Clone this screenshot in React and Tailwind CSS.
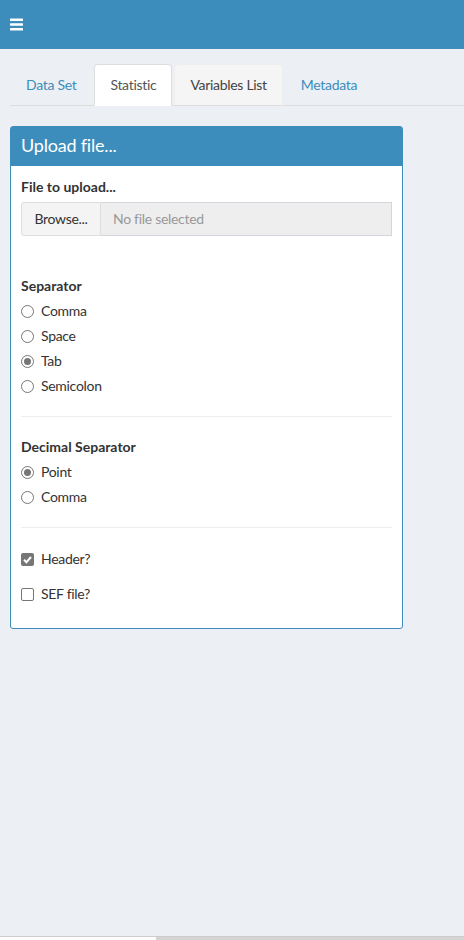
import React from "react";

function Radio({ label, checked }) {
  return (
    <label className="flex items-center h-5 gap-[7px]">
      <span className="w-[13px] h-[13px] rounded-full border border-[#767676] bg-white flex items-center justify-center">
        {checked && <span className="w-[7px] h-[7px] rounded-full bg-[#767676]" />}
      </span>
      <span className="tracking-[-0.3px]">{label}</span>
    </label>
  );
}

function Checkbox({ label, checked }) {
  return (
    <label className="flex items-center h-5 gap-[7px]">
      {checked ? (
        <span className="w-[13px] h-[13px] rounded-[2px] bg-[#767676] flex items-center justify-center">
          <svg width="11" height="11" viewBox="0 0 11 11">
            <path d="M2 5.8 L4.4 8.2 L9 3" fill="none" stroke="#fff" strokeWidth="2" />
          </svg>
        </span>
      ) : (
        <span className="w-[13px] h-[13px] rounded-[2px] border border-[#767676] bg-white" />
      )}
      <span className="tracking-[-0.3px]">{label}</span>
    </label>
  );
}

export default function App() {
  const tabs = [
    { name: "Data Set" },
    { name: "Statistic", active: true },
    { name: "Variables List", hover: true },
    { name: "Metadata" },
  ];

  return (
    <div
      className="h-[940px] flex flex-col bg-[#ecf0f5] text-[14px] leading-5 text-[#333]"
      style={{ fontFamily: "Lato, 'Noto Sans', sans-serif" }}
    >
      <header className="h-[49px] bg-[#3c8dbc] flex items-center px-[10px] shrink-0">
        <svg width="13" height="13" viewBox="0 0 13 13">
          <rect x="0" y="0.5" width="13" height="2.6" rx="0.6" fill="#fff" />
          <rect x="0" y="5.2" width="13" height="2.6" rx="0.6" fill="#fff" />
          <rect x="0" y="9.9" width="13" height="2.6" rx="0.6" fill="#fff" />
        </svg>
      </header>

      <main className="flex-1 pt-[15px]">
        <ul className="ml-[10px] flex border-b border-[#ddd]">
          {tabs.map((t) => (
            <li key={t.name} className="mr-[2px] -mb-px">
              <a
                className={
                  "block px-[15px] py-[10px] rounded-t-[4px] border tracking-[-0.3px] " +
                  (t.active
                    ? "bg-white border-[#ddd] border-b-white text-[#555]"
                    : t.hover
                    ? "bg-[#f5f5f5] border-[#eee] border-b-[#ddd] text-[#444]"
                    : "border-transparent text-[#3c8dbc]")
                }
              >
                {t.name}
              </a>
            </li>
          ))}
        </ul>

        <section className="ml-[10px] mt-[20px] w-[393px] border border-[#3c8dbc] rounded-[3px] bg-white">
          <div className="bg-[#3c8dbc] px-[10px] pt-[8px] pb-[10px] text-white text-[18px] leading-[21px] tracking-[-0.2px]">
            Upload file...
          </div>
          <div className="px-[10px] pt-[11px] pb-[24px]">
            <div className="font-bold mb-[5px]">File to upload...</div>
            <div className="flex h-[34px]">
              <div className="w-[80px] border border-[#ddd] bg-[#f4f4f4] rounded-l-[3px] flex items-center justify-center text-[#333] tracking-[-0.3px]">
                Browse...
              </div>
              <div className="flex-1 border border-l-0 border-[#d2d6de] bg-[#eee] flex items-center px-[12px] text-[#999] tracking-[-0.3px]">
                No file selected
              </div>
            </div>

            <div className="font-bold mt-[40px] mb-[5px]">Separator</div>
            <div className="flex flex-col gap-[5px]">
              <Radio label="Comma" />
              <Radio label="Space" />
              <Radio label="Tab" checked />
              <Radio label="Semicolon" />
            </div>

            <hr className="my-[20px] border-t border-[#eee]" />

            <div className="font-bold mb-[5px]">Decimal Separator</div>
            <div className="flex flex-col gap-[5px]">
              <Radio label="Point" checked />
              <Radio label="Comma" />
            </div>

            <hr className="my-[20px] border-t border-[#eee]" />

            <div className="pt-[1px] flex flex-col gap-[15px]">
              <Checkbox label="Header?" checked />
              <Checkbox label="SEF file?" />
            </div>
          </div>
        </section>
      </main>

      <div className="h-[4px] shrink-0 flex border-t border-[#ccc]">
        <div className="w-[156px] bg-white" />
        <div className="flex-1 bg-[#d4d4d4]" />
      </div>
    </div>
  );
}
